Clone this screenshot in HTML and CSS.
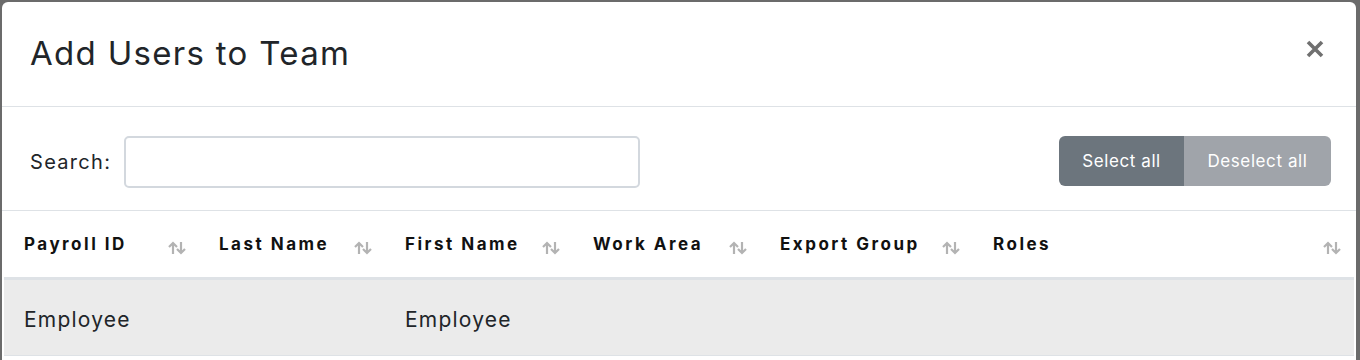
FILE: index.html
```html
<!DOCTYPE html>
<html>
<head>
<meta charset="utf-8">
<link rel="stylesheet" href="styles.css">
</head>
<body>
<div class="modal">
  <div class="modal-header">
    <h1 class="modal-title">Add Users to Team</h1>
    <button class="close" aria-label="Close">
      <svg width="20" height="18" viewBox="0 0 20 18"><path d="M3 2 L17 16 M17 2 L3 16" stroke="#707070" stroke-width="3.6" stroke-linecap="butt"/></svg>
    </button>
  </div>
  <div class="toolbar">
    <label class="search">Search: <input type="text" class="search-input"></label>
    <div class="btn-group">
      <button class="btn btn-select">Select all</button>
      <button class="btn btn-deselect">Deselect all</button>
    </div>
  </div>
  <table class="users">
    <colgroup>
      <col style="width:195px"><col style="width:186px"><col style="width:188px"><col style="width:187px"><col style="width:213px"><col>
    </colgroup>
    <thead>
      <tr>
        <th><div class="th"><span>Payroll ID</span><svg class="sort" viewBox="0 0 20 14"><path d="M6 13V2M2 6l4-4 4 4M14 1v11M10 8l4 4 4-4" fill="none" stroke="#b3b3b3" stroke-width="2.2"/></svg></div></th>
        <th><div class="th"><span>Last Name</span><svg class="sort" viewBox="0 0 20 14"><path d="M6 13V2M2 6l4-4 4 4M14 1v11M10 8l4 4 4-4" fill="none" stroke="#b3b3b3" stroke-width="2.2"/></svg></div></th>
        <th><div class="th"><span>First Name</span><svg class="sort" viewBox="0 0 20 14"><path d="M6 13V2M2 6l4-4 4 4M14 1v11M10 8l4 4 4-4" fill="none" stroke="#b3b3b3" stroke-width="2.2"/></svg></div></th>
        <th><div class="th"><span>Work Area</span><svg class="sort" viewBox="0 0 20 14"><path d="M6 13V2M2 6l4-4 4 4M14 1v11M10 8l4 4 4-4" fill="none" stroke="#b3b3b3" stroke-width="2.2"/></svg></div></th>
        <th><div class="th"><span>Export Group</span><svg class="sort" viewBox="0 0 20 14"><path d="M6 13V2M2 6l4-4 4 4M14 1v11M10 8l4 4 4-4" fill="none" stroke="#b3b3b3" stroke-width="2.2"/></svg></div></th>
        <th><div class="th"><span>Roles</span><svg class="sort" viewBox="0 0 20 14"><path d="M6 13V2M2 6l4-4 4 4M14 1v11M10 8l4 4 4-4" fill="none" stroke="#b3b3b3" stroke-width="2.2"/></svg></div></th>
      </tr>
    </thead>
    <tbody>
      <tr>
        <td>Employee</td><td></td><td>Employee</td><td></td><td></td><td></td>
      </tr>
    </tbody>
  </table>
</div>
</body>
</html>
```
FILE: styles.css
```css
html, body {
  margin: 0;
  height: 100%;
}
body {
  background: #6b6b6b;
  padding: 2px 4px 0 2px;
  box-sizing: border-box;
  overflow: hidden;
  font-family: Inter, "Open Sans", sans-serif;
  color: #212529;
}
.modal {
  background: #fff;
  border-radius: 6px 6px 0 0;
  height: 400px;
}
.modal-header {
  height: 105px;
  border-bottom: 1px solid #dee2e6;
  display: flex;
  align-items: center;
  justify-content: space-between;
  padding: 0 31px 0 28px;
  box-sizing: border-box;
}
.modal-title {
  margin: 0;
  font-weight: 400;
  font-size: 33px;
  letter-spacing: 1.3px;
  color: #212529;
  position: relative;
  top: -1px;
}
.close {
  border: 0;
  background: none;
  padding: 0;
  width: 20px;
  height: 18px;
  position: relative;
  top: -5px;
}
.close svg { display: block; }
.toolbar {
  height: 97px;
  padding: 6px 25px 0 28px;
  border-bottom: 1px solid #dee2e6;
  display: flex;
  align-items: center;
  justify-content: space-between;
}
.search {
  display: flex;
  align-items: center;
  gap: 13px;
  font-size: 20px;
  letter-spacing: 1.3px;
  color: #212529;
}
.search-input {
  width: 516px;
  height: 52px;
  box-sizing: border-box;
  border: 2px solid #d3d8de;
  border-radius: 5px;
  margin: 0;
}
.btn-group {
  display: flex;
  height: 50px;
  position: relative;
  top: -1px;
}
.btn {
  border: 0;
  color: #fff;
  font-family: Inter, sans-serif;
  font-size: 17px;
  letter-spacing: 0.6px;
  padding: 0;
}
.btn-select {
  background: #6c757d;
  width: 125px;
  border-radius: 6px 0 0 6px;
}
.btn-deselect {
  background: #a0a4aa;
  width: 147px;
  border-radius: 0 6px 6px 0;
}
.users {
  width: calc(100% - 4px);
  margin: 0 2px;
  border-collapse: collapse;
  table-layout: fixed;
}
.users th {
  height: 66px;
  padding: 0 12px 0 20px;
  text-align: left;
  border-bottom: 3px solid #dee2e6;
  font-size: 17px;
  font-weight: 700;
  letter-spacing: 2.5px;
  color: #111;
}
.th {
  display: flex;
  align-items: center;
  justify-content: space-between;
}
.sort {
  width: 20px;
  height: 14px;
  flex: none;
  position: relative;
  top: 4px;
}
.users td {
  height: 77px;
  padding: 4px 20px 0;
  box-sizing: border-box;
  background: #ebebeb;
  border-bottom: 1px solid #dee2e6;
  font-size: 21px;
  letter-spacing: 1.2px;
  color: #212529;
}
```
